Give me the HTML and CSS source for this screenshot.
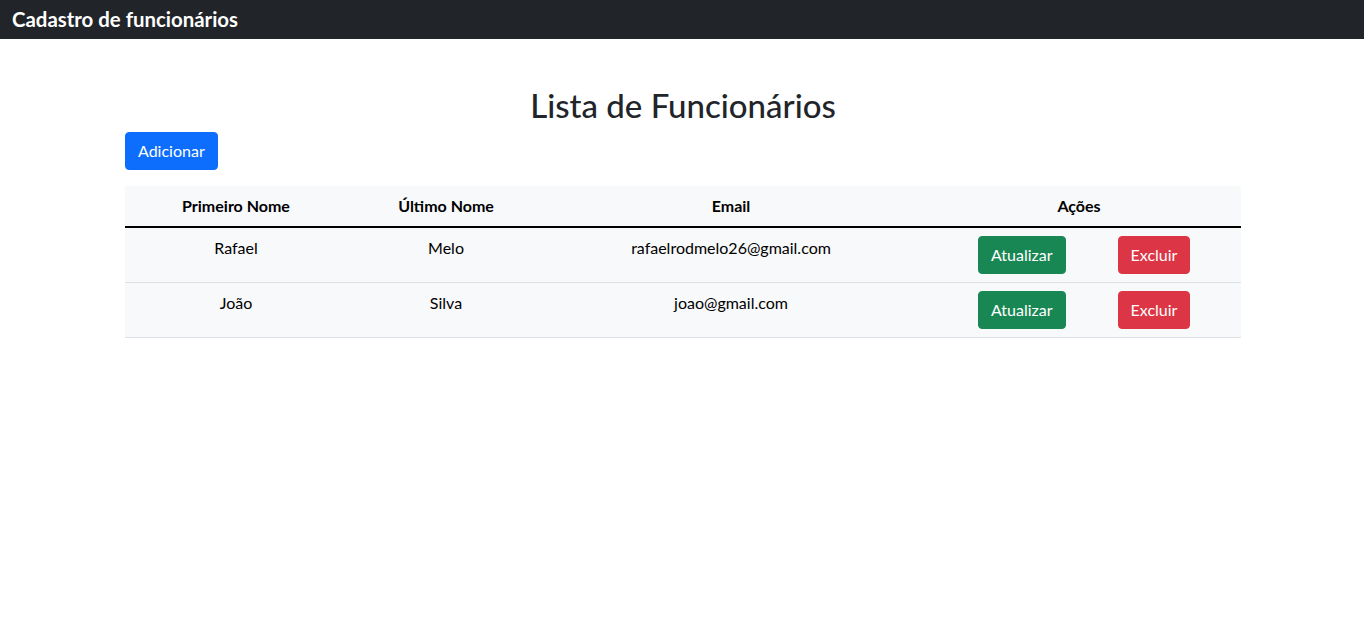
FILE: index.html
```html
<!DOCTYPE html>
<html lang="pt-BR">
<head>
<meta charset="utf-8">
<title>Cadastro de funcionários</title>
<link rel="stylesheet" href="styles.css">
</head>
<body>
<header class="navbar">
  <span class="brand">Cadastro de funcionários</span>
</header>
<main class="container">
  <h2 class="title">Lista de Funcionários</h2>
  <button class="btn btn-primary">Adicionar</button>
  <table class="table">
    <colgroup>
      <col class="c1"><col class="c2"><col class="c3"><col class="c4">
    </colgroup>
    <thead>
      <tr>
        <th>Primeiro Nome</th>
        <th>Último Nome</th>
        <th>Email</th>
        <th>Ações</th>
      </tr>
    </thead>
    <tbody>
      <tr>
        <td>Rafael</td>
        <td>Melo</td>
        <td>rafaelrodmelo26@gmail.com</td>
        <td class="actions"><div class="action-row"><button class="btn btn-success">Atualizar</button><button class="btn btn-danger">Excluir</button></div></td>
      </tr>
      <tr>
        <td>João</td>
        <td>Silva</td>
        <td>joao@gmail.com</td>
        <td class="actions"><div class="action-row"><button class="btn btn-success">Atualizar</button><button class="btn btn-danger">Excluir</button></div></td>
      </tr>
    </tbody>
  </table>
</main>
</body>
</html>
```

FILE: styles.css
```css
* { box-sizing: border-box; }
body {
  margin: 0;
  font-family: Lato, "Noto Sans", sans-serif;
  font-size: 16px;
  line-height: 1.5;
  color: #212529;
  background: #fff;
}
.navbar {
  height: 39px;
  background: #212529;
  display: flex;
  align-items: center;
  padding-left: 12px;
}
.brand {
  color: #fff;
  font-size: 20.4px;
  font-weight: 700;
  line-height: 1;
  margin-top: -1px;
}
.container {
  width: 1118px;
  padding-left: 2px;
  margin: 0 auto;
}
.title {
  margin: 48px 0 8px;
  text-align: center;
  font-size: 33px;
  font-weight: 500;
  line-height: 37.4px;
}
.btn {
  display: inline-block;
  font-family: inherit;
  font-size: 16px;
  line-height: 24px;
  padding: 6px 12px;
  border: 1px solid transparent;
  border-radius: 4px;
  color: #fff;
  cursor: pointer;
}
.btn-primary { background: #0d6efd; border-color: #0d6efd; }
.btn-success { background: #198754; border-color: #198754; }
.btn-danger { background: #dc3545; border-color: #dc3545; }
.table {
  width: 100%;
  margin-top: 16px;
  border-collapse: collapse;
  table-layout: fixed;
  background: #f8f9fa;
  color: #000;
}
.c1 { width: 222px; }
.c2 { width: 198px; }
.c3 { width: 372px; }
.c4 { width: 324px; }
.table th, .table td {
  padding: 8px;
  text-align: center;
  vertical-align: top;
  border-bottom: 1px solid #dee2e6;
}
.table th {
  font-weight: 700;
  border-bottom: 2px solid #000;
}
.table td.actions {
  padding-left: 61px;
  text-align: left;
}
.action-row {
  display: flex;
  gap: 52px;
}
```
